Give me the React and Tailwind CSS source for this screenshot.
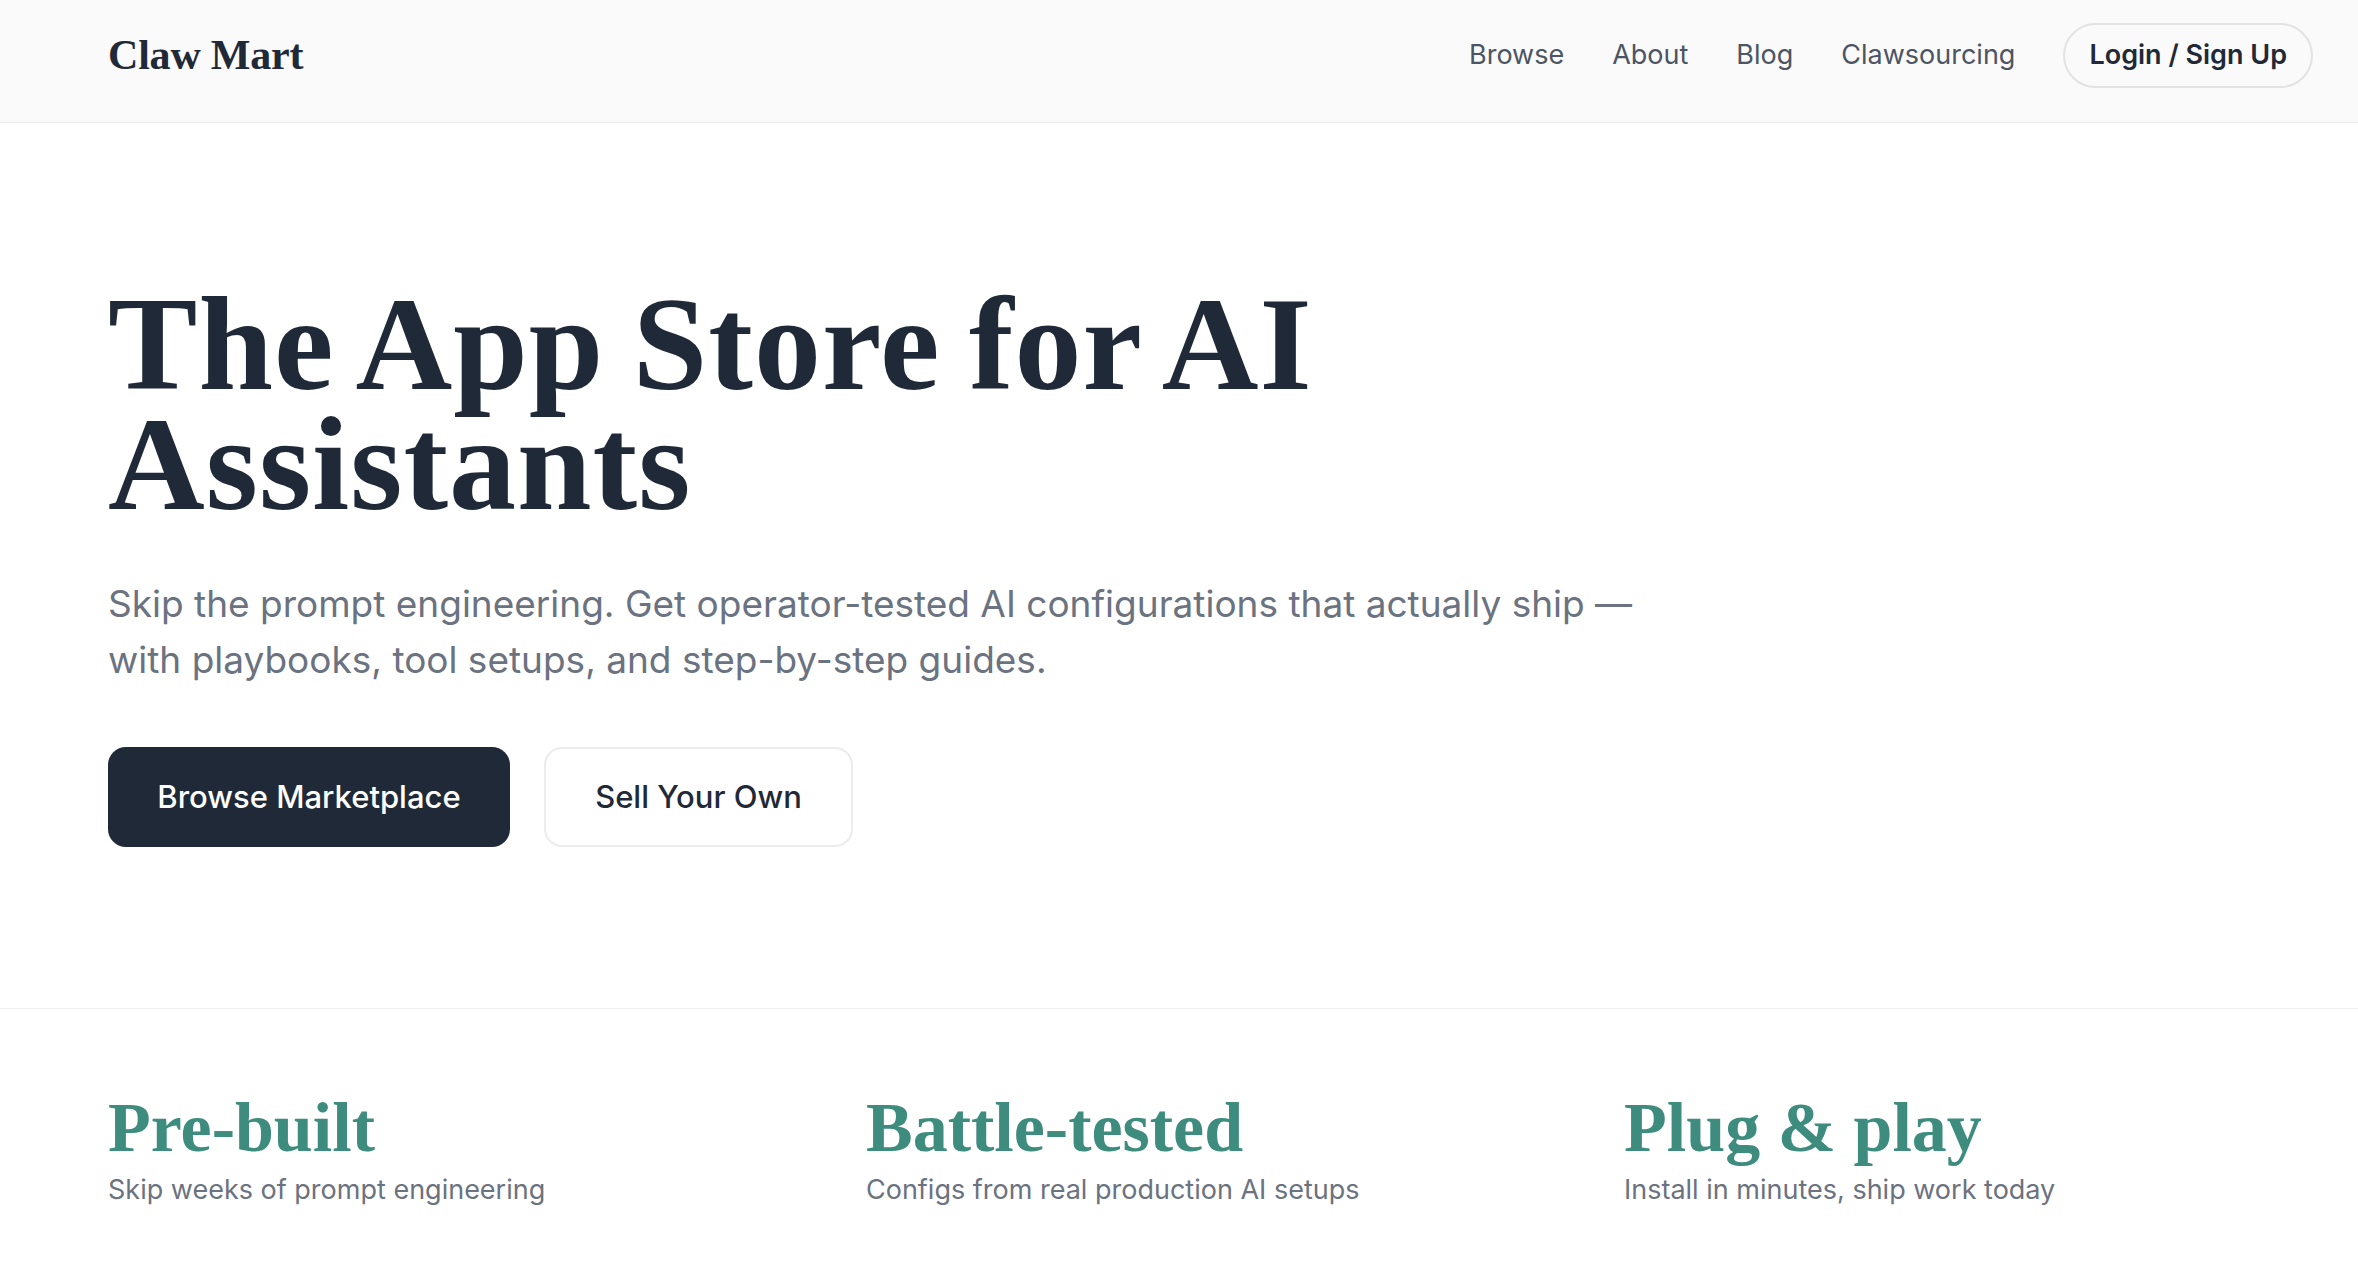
import React from "react";

const features = [
  { title: "Pre-built", text: "Skip weeks of prompt engineering" },
  { title: "Battle-tested", text: "Configs from real production AI setups" },
  { title: "Plug & play", text: "Install in minutes, ship work today" },
];

function Header() {
  return (
    <header className="h-[123px] pb-[11px] bg-[#fafafa] border-b border-[#ececec] flex items-center justify-between pl-[108px] pr-[45px]">
      <a className="font-['Liberation_Serif',serif] font-bold text-[42px] tracking-[-0.2px] text-[#1f2937]">Claw Mart</a>
      <nav className="flex items-center gap-12 text-[27px] text-[#4b5563]">
        <a>Browse</a>
        <a>About</a>
        <a>Blog</a>
        <a>Clawsourcing</a>
        <button className="h-[65px] px-6 rounded-full border-2 border-[#e2e2e2] font-semibold text-[#1f2937]">
          Login / Sign Up
        </button>
      </nav>
    </header>
  );
}

export default function App() {
  return (
    <div className="min-h-screen bg-white font-['Inter',sans-serif]">
      <Header />

      <section className="pl-[108px] pr-[48px] pt-[161px] pb-[161px] border-b border-[#f0f0f0]">
        <h1 className="font-['Liberation_Serif',serif] font-bold text-[134px] leading-[120px] tracking-[1px] [word-spacing:-6px] text-[#1f2937]">
          The App Store for AI
          <br />
          Assistants
        </h1>
        <p className="mt-[52px] max-w-[1560px] text-[37px] leading-[56px] text-[#6b7280]">
          Skip the prompt engineering. Get operator-tested AI configurations that actually ship — with playbooks, tool setups, and step-by-step guides.
        </p>
        <div className="mt-[59px] flex items-center gap-[34px]">
          <button className="h-[100px] w-[402px] rounded-[18px] bg-[#1f2937] text-white text-[31px] font-medium">
            Browse Marketplace
          </button>
          <button className="h-[100px] w-[309px] rounded-[18px] border-2 border-[#ececec] bg-white text-[#1f2937] text-[31px] font-medium">
            Sell Your Own
          </button>
        </div>
      </section>

      <section className="pl-[108px] pr-[48px] pt-[80px] grid grid-cols-3 gap-[72px]">
        {features.map((f) => (
          <div key={f.title}>
            <h3 className="font-['Liberation_Serif',serif] font-bold text-[70px] leading-[77px] text-[#3d8c7e]">
              {f.title}
            </h3>
            <p className="mt-1 text-[27px] leading-[40px] text-[#6b7280]">{f.text}</p>
          </div>
        ))}
      </section>
    </div>
  );
}
